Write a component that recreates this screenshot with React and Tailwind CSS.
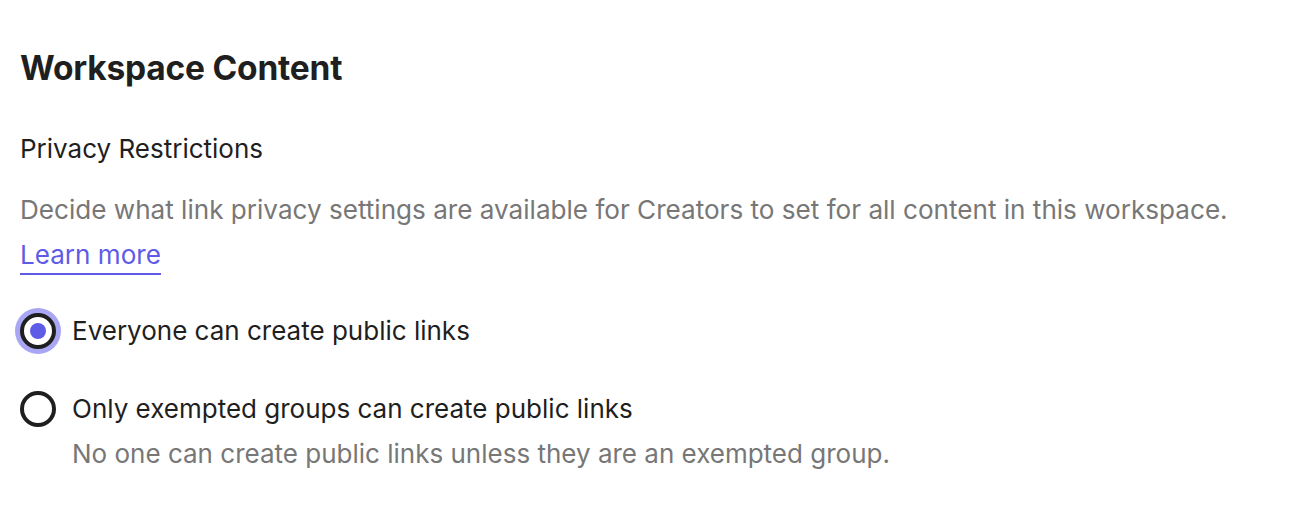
const options = [
  { id: 'everyone', label: 'Everyone can create public links' },
  {
    id: 'exempted',
    label: 'Only exempted groups can create public links',
    hint: 'No one can create public links unless they are an exempted group.',
  },
]

function Radio({ checked }) {
  return (
    <span
      className={`flex h-[36px] w-[36px] shrink-0 items-center justify-center rounded-full border-[4px] border-[#1f1f1f] bg-white ${
        checked ? 'ring-[5px] ring-[#a9a6f4]' : ''
      }`}
    >
      {checked && <span className="h-[16px] w-[16px] rounded-full bg-[#5e5ce6]" />}
    </span>
  )
}

export default function App() {
  const selected = 'everyone'

  return (
    <div className="min-h-[532px] bg-white px-[20px] pt-[48px] font-['Inter',sans-serif] text-[#1f1f1f]">
      <h1 className="text-[33.5px] font-bold leading-[40px] tracking-[-0.2px]">Workspace Content</h1>

      <h2 className="mt-[43px] text-[26px] leading-[36px]">Privacy Restrictions</h2>

      <p className="mt-[20px] max-w-[1240px] text-[26.1px] leading-[45px] text-[#777777]">
        Decide what link privacy settings are available for Creators to set for all content in this workspace.{' '}
        <a href="#" className="text-[#5e5ce6] underline decoration-2 underline-offset-[9px]">
          Learn more
        </a>
      </p>

      <div className="mt-[32px] flex flex-col gap-[34px]">
        {options.map((opt) => (
          <label key={opt.id} className="flex cursor-pointer items-start gap-[16px]">
            <span className="flex h-[44px] items-center">
              <Radio checked={selected === opt.id} />
            </span>
            <span className="flex flex-col">
              <span className="text-[26px] leading-[44px]">{opt.label}</span>
              {opt.hint && <span className="text-[26px] leading-[45px] text-[#777777]">{opt.hint}</span>}
            </span>
          </label>
        ))}
      </div>
    </div>
  )
}
